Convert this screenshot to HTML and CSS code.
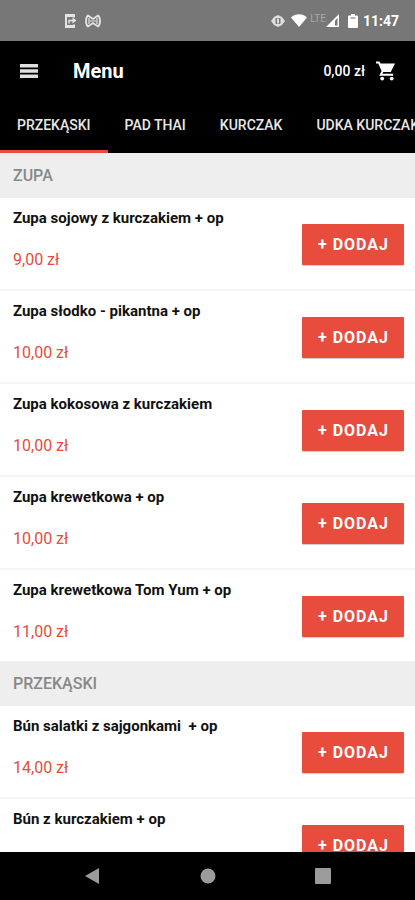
FILE: index.html
```html
<!DOCTYPE html>
<html lang="pl">

<head>
    <meta charset="UTF-8">
    <meta name="viewport" content="width=device-width, initial-scale=1.0">
    <title>Menu</title>
    <link rel="stylesheet" href="styles.css">
</head>

<body>
    <!-- Pasek stanu -->
    <div class="status-bar">
        <div class="status-left">
            <svg width="13" height="16" viewBox="0 0 13 16" fill="none" stroke="#e4e4e4" stroke-width="2">
                <path d="M10 4.500V2H2v12h8v-2.500" />
                <path d="M2 2.500h8M2 13.500h8" stroke-width="3" />
                <path d="M5 10.500V7.500h5" stroke-width="1.500" />
                <path d="M8.500 4.500l4 3-4 3z" fill="#e4e4e4" stroke="none" />
            </svg>
            <svg width="16" height="14" viewBox="0 0 16 14" fill="none" stroke="#e4e4e4" stroke-width="1.800">
                <path d="M3 1.500L8 5l5-3.500q2 1.500 2 5.500t-2 5.500L8 9l-5 3.500Q1 11 1 7t2-5.500z" />
                <path d="M4 4v6M12 4v6M5 7h6" stroke-width="1.200" />
            </svg>
        </div>
        <div class="status-right">
            <svg width="14" height="12" viewBox="0 0 14 12">
                <path d="M0 6l3-4 4-2 4 2 3 4-3 4-4 2-4-2z" fill="#dedede" />
                <rect x="4.500" y="3" width="5" height="6" rx="1" fill="#777" />
                <path d="M7 3.500v5" stroke="#dedede" stroke-width="2" />
            </svg>
            <svg class="wifi" width="16" height="13" viewBox="0 0 16 13">
                <path d="M0 3.500C4.500-.7 11.500-.7 16 3.500L8 13z" fill="#fff" />
            </svg>
            <span class="lte">LTE</span>
            <svg width="13" height="13" viewBox="0 0 13 13">
                <path d="M0 13L13 0v13z" fill="#fff" />
                <path d="M9 6.500l2.500-2.500v7.500H9z" fill="#777" />
            </svg>
            <svg class="battery" width="10" height="14" viewBox="0 0 10 14">
                <path d="M3 0h4v1.500h2q1 0 1 1V13q0 1-1 1H1q-1 0-1-1V2.500q0-1 1-1h2z" fill="#fff" />
                <path d="M2.500 4h5" stroke="#999" stroke-width="1.500" />
            </svg>
            <span class="clock">11:47</span>
        </div>
    </div>

    <!-- Nagłówek aplikacji -->
    <header class="app-bar">
        <button class="icon-button" type="button" aria-label="Otwórz menu">
            <svg width="20" height="14" viewBox="0 0 20 14" fill="#e0e0e0">
                <path d="M1 0h18v3.500H1zM1 5.200h18v3.500H1zM1 10.500h18V14H1z" />
            </svg>
        </button>
        <h1>Menu</h1>
        <span class="total">0,00 zł</span>
        <button class="icon-button" type="button" aria-label="Koszyk">
            <svg width="20" height="20" viewBox="1 2 21 20" fill="#fff">
                <path d="M4 4h17l-4.500 9H8z" />
                <path d="M1 3h3l4 9-2 4h13" fill="none" stroke="#fff" stroke-width="2" />
                <circle cx="7.500" cy="20" r="2" />
                <circle cx="17.500" cy="20" r="2" />
            </svg>
        </button>
    </header>

    <nav class="tabs">
        <a class="tab active" href="#przekaski">PRZEKĄSKI</a>
        <a class="tab" href="#pad-thai">PAD THAI</a>
        <a class="tab" href="#kurczak">KURCZAK</a>
        <a class="tab" href="#udka">UDKA KURCZAKA</a>
    </nav>

    <!-- Lista dań -->
    <main class="menu-list">
        <section>
            <h2>ZUPA</h2>
            <div class="dish">
                <div class="info">
                    <h3>Zupa sojowy z kurczakiem + op</h3>
                    <p class="price">9,00 zł</p>
                </div>
                <button class="add" type="button">+ DODAJ</button>
            </div>
            <div class="dish">
                <div class="info">
                    <h3>Zupa słodko - pikantna + op</h3>
                    <p class="price">10,00 zł</p>
                </div>
                <button class="add" type="button">+ DODAJ</button>
            </div>
            <div class="dish">
                <div class="info">
                    <h3>Zupa kokosowa z kurczakiem</h3>
                    <p class="price">10,00 zł</p>
                </div>
                <button class="add" type="button">+ DODAJ</button>
            </div>
            <div class="dish">
                <div class="info">
                    <h3>Zupa krewetkowa + op</h3>
                    <p class="price">10,00 zł</p>
                </div>
                <button class="add" type="button">+ DODAJ</button>
            </div>
            <div class="dish">
                <div class="info">
                    <h3>Zupa krewetkowa Tom Yum + op</h3>
                    <p class="price">11,00 zł</p>
                </div>
                <button class="add" type="button">+ DODAJ</button>
            </div>
        </section>
        <section id="przekaski">
            <h2>PRZEKĄSKI</h2>
            <div class="dish">
                <div class="info">
                    <h3>Bún salatki z sajgonkami&nbsp; + op</h3>
                    <p class="price">14,00 zł</p>
                </div>
                <button class="add" type="button">+ DODAJ</button>
            </div>
            <div class="dish">
                <div class="info">
                    <h3>Bún z kurczakiem + op</h3>
                </div>
                <button class="add" type="button">+ DODAJ</button>
            </div>
        </section>
    </main>

    <!-- Nawigacja systemowa -->
    <div class="system-nav">
        <button class="icon-button" type="button" aria-label="Wstecz">
            <svg width="16" height="18" viewBox="0 0 16 18" fill="#9b9b9b"><path d="M15 1v16L1 9z" /></svg>
        </button>
        <button class="icon-button" type="button" aria-label="Ekran główny">
            <svg width="16" height="16" viewBox="0 0 16 16" fill="#9b9b9b"><circle cx="8" cy="8" r="7.500" /></svg>
        </button>
        <button class="icon-button" type="button" aria-label="Ostatnie">
            <svg width="16" height="16" viewBox="0 0 16 16" fill="#9b9b9b"><rect width="16" height="16" rx="1" /></svg>
        </button>
    </div>
</body>

</html>
```
FILE: styles.css
```css
/* Styl dla całej strony */
body {
    margin: 0;
    height: 100vh;
    display: flex;
    flex-direction: column;
    overflow: hidden;
    background-color: #fff;
    font-family: Roboto, "Liberation Sans", sans-serif;
}

h1,
h2,
h3,
p {
    margin: 0;
}

svg {
    display: block;
}

button {
    border: none;
    font-family: inherit;
    cursor: pointer;
}

.icon-button {
    padding: 0;
    background: none;
}

/* Pasek stanu */
.status-bar {
    flex: none;
    display: flex;
    justify-content: space-between;
    align-items: center;
    height: 41px;
    padding: 0 16px 0 64px;
    background-color: #777;
    color: #fff;
}

.status-left,
.status-right {
    display: flex;
    align-items: center;
}

.status-left {
    gap: 8px;
}

.wifi {
    margin-left: 6px;
}

.lte {
    margin: 0 0 4px 3px;
    color: #a8a8a8;
    font-size: 10px;
    line-height: 10px;
}

.battery {
    margin: 0 5px 0 9px;
}

.clock {
    font-size: 14px;
    font-weight: 700;
}

/* Nagłówek */
.app-bar {
    flex: none;
    display: flex;
    align-items: center;
    height: 59px;
    padding: 0 19px;
    background-color: #000;
    color: #fff;
}

.app-bar h1 {
    flex: 1;
    margin-left: 34px;
    font-size: 20px;
    font-weight: 700;
}

.total {
    margin-right: 11px;
    font-size: 14px;
    font-weight: 500;
}

/* Zakładki */
.tabs {
    flex: none;
    display: flex;
    overflow: hidden;
    background-color: #000;
}

.tab {
    flex: none;
    padding: 0 17px;
    border-bottom: 3px solid transparent;
    color: #e8e8e8;
    font-size: 14px;
    font-weight: 500;
    line-height: 50px;
    text-decoration: none;
}

.tab.active {
    border-bottom-color: #e74c3c;
}

/* Lista dań */
.menu-list {
    flex: 1;
    min-height: 0;
    overflow: hidden;
}

.menu-list h2 {
    padding: 1px 13px 0;
    background-color: #eee;
    color: #888;
    font-size: 16px;
    font-weight: 500;
    line-height: 44px;
}

.dish {
    display: flex;
    justify-content: space-between;
    align-items: flex-start;
    padding: 10px 11px 19px 13px;
    border-bottom: 2px solid #f6f6f6;
}

.dish:last-child {
    border-bottom: none;
}

.dish h3 {
    color: #111;
    font-size: 15px;
    font-weight: 700;
    line-height: 20px;
}

.price {
    margin-top: 22px;
    color: #e74c3c;
    font-size: 16px;
    font-weight: 400;
    line-height: 20px;
}

/* Przycisk dodawania do koszyka */
.add {
    flex: none;
    height: 41px;
    margin-top: 16px;
    padding: 0 15px 0 16px;
    border-radius: 1px;
    background-color: #e74c3c;
    box-shadow: 0 1px 1px rgba(0, 0, 0, 0.2);
    color: #fff;
    font-size: 16px;
    font-weight: 700;
    letter-spacing: 1px;
}

/* Nawigacja systemowa */
.system-nav {
    flex: none;
    display: flex;
    justify-content: space-between;
    align-items: center;
    height: 48px;
    padding: 0 84px;
    background-color: #000;
}
```
